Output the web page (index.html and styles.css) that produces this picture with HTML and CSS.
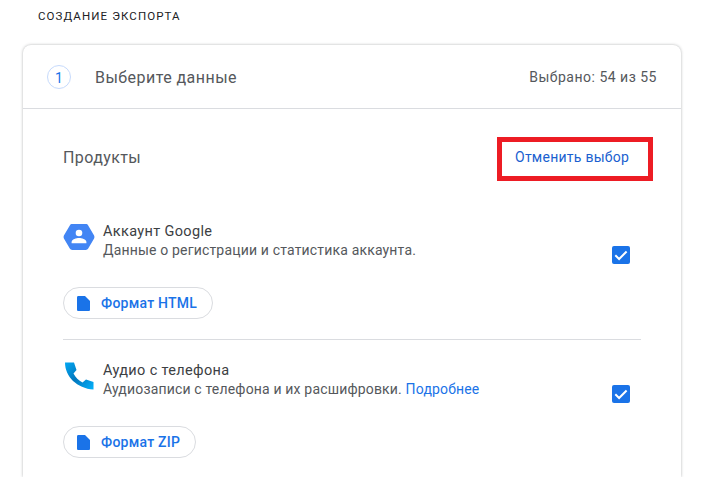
FILE: index.html
```html
<!DOCTYPE html>
<html lang="ru">
  <head>
    <meta charset="UTF-8" />
    <meta name="viewport" content="width=device-width, initial-scale=1.0" />
    <title>Создание экспорта</title>
    <link rel="stylesheet" href="styles.css">
  </head>
  <body>
    <h1 class="page-title">Создание экспорта</h1>

    <div class="card">
      <div class="step-header">
        <span class="step-number">1</span>
        <span class="step-title">Выберите данные</span>
        <span class="step-count">Выбрано: 54 из 55</span>
      </div>

      <div class="products">
        <div class="products-head">
          <span class="products-title">Продукты</span>
          <a class="deselect" href="#">Отменить выбор</a>
        </div>

        <div class="product">
          <div class="product-row">
            <svg class="product-icon" width="32" height="28" viewBox="0 0 32 28">
              <path fill="#4285f4" d="M9.200 1h13.600c1 0 1.900.5 2.400 1.400l5.900 10.200c.5.9.5 1.900 0 2.800l-5.900 10.200c-.5.9-1.400 1.400-2.400 1.400H9.200c-1 0-1.900-.5-2.400-1.400L.9 15.400c-.5-.9-.5-1.900 0-2.800L6.800 2.400C7.300 1.500 8.200 1 9.200 1z"/>
              <circle fill="#fff" cx="16" cy="10" r="3.300"/>
              <path fill="#fff" d="M8.600 20.200v-1.300c0-2.600 4.900-3.900 7.400-3.900s7.400 1.300 7.400 3.900v1.300z"/>
            </svg>
            <div class="product-text">
              <div class="product-name">Аккаунт Google</div>
              <div class="product-desc">Данные о регистрации и статистика аккаунта.</div>
            </div>
            <span class="checkbox">
              <svg width="18" height="18" viewBox="0 0 18 18"><path fill="none" stroke="#fff" stroke-width="2" d="M3.300 9.300l3.800 3.700 7.500-7.500"/></svg>
            </span>
          </div>
          <a class="format-chip" href="#">
            <svg width="13" height="15" viewBox="0 0 13 15"><path fill="#1a73e8" d="M1.300 0H8L13 5V13.700c0 .7-.6 1.300-1.300 1.300H1.300C.6 15 0 14.400 0 13.700V1.300C0 .6.600 0 1.300 0z"/></svg>
            Формат HTML
          </a>
        </div>

        <div class="product">
          <div class="product-row">
            <svg class="product-icon" width="32" height="28" viewBox="0 0 32 28">
              <defs>
                <linearGradient id="phone-grad" gradientUnits="userSpaceOnUse" x1="2" y1="0" x2="30" y2="27">
                  <stop offset="0" stop-color="#03a9f4"/>
                  <stop offset="0.5" stop-color="#0277bd"/>
                  <stop offset="1" stop-color="#03b0fa"/>
                </linearGradient>
              </defs>
              <path fill="url(#phone-grad)" d="M2 .5h9l2.500 7.500-3 3.500c2 4 5 7 9 9l3.500-3 7.500 2.500v7.500C14 26.500 2 14.500 2 .5z"/>
            </svg>
            <div class="product-text">
              <div class="product-name">Аудио с телефона</div>
              <div class="product-desc">Аудиозаписи с телефона и их расшифровки. <a href="#">Подробнее</a></div>
            </div>
            <span class="checkbox">
              <svg width="18" height="18" viewBox="0 0 18 18"><path fill="none" stroke="#fff" stroke-width="2" d="M3.300 9.300l3.800 3.700 7.500-7.500"/></svg>
            </span>
          </div>
          <a class="format-chip" href="#">
            <svg width="13" height="15" viewBox="0 0 13 15"><path fill="#1a73e8" d="M1.300 0H8L13 5V13.700c0 .7-.6 1.300-1.300 1.300H1.300C.6 15 0 14.400 0 13.700V1.300C0 .6.600 0 1.300 0z"/></svg>
            Формат ZIP
          </a>
        </div>
      </div>
    </div>
  </body>
</html>
```

FILE: styles.css
```css
html,
body {
  height: 100%;
}
body {
  display: flex;
  flex-direction: column;
  margin: 0;
  overflow: hidden;
  background-color: #fff;
  font-family: Roboto, "Noto Sans", sans-serif;
  color: #3c4043;
}
a {
  text-decoration: none;
  color: #1a73e8;
}
.page-title {
  flex-shrink: 0;
  margin: 0;
  padding: 9px 0 0 38px;
  height: 35px;
  font-size: 11.500px;
  line-height: 15px;
  font-weight: 400;
  letter-spacing: 1.1px;
  text-transform: uppercase;
  color: #202124;
}
.card {
  flex: 1;
  box-sizing: border-box;
  margin: 1px 0 0 23px;
  width: 658px;
  border-radius: 8px 8px 0 0;
  background-color: #fff;
  box-shadow: 0 0 3px rgba(60, 64, 67, 0.4);
}
.step-header {
  display: flex;
  align-items: center;
  box-sizing: border-box;
  height: 64px;
  padding: 1px 24px 0;
  border-bottom: 1px solid #dadce0;
}
.step-number {
  width: 24px;
  height: 24px;
  box-sizing: border-box;
  border: 1px solid #c6dafc;
  border-radius: 50%;
  margin-right: 24px;
  text-align: center;
  font-size: 14px;
  line-height: 24px;
  color: #1a73e8;
}
.step-title {
  flex: 1;
  font-size: 16px;
  letter-spacing: 0.45px;
  color: #55585c;
}
.step-count {
  font-size: 14px;
  letter-spacing: 0.5px;
  color: #55585c;
}
.products {
  padding: 28px 40px 0;
}
.products-head {
  display: flex;
  align-items: center;
  justify-content: space-between;
  height: 44px;
  margin-bottom: 43px;
}
.products-title {
  margin-top: -4px;
  font-size: 16px;
  letter-spacing: 0.4px;
  color: #55585c;
}
.deselect {
  box-sizing: border-box;
  width: 156px;
  height: 44px;
  margin-right: -12px;
  border: 5px solid #ed1c24;
  padding-left: 13px;
  font-size: 14px;
  letter-spacing: 0.25px;
  line-height: 30px;
  color: #1a5fd0;
}
.product {
  padding-bottom: 20px;
  border-bottom: 1px solid #dadce0;
  margin-bottom: 23px;
}
.product:last-child {
  padding-bottom: 0;
  border-bottom: none;
  margin-bottom: 0;
}
.product-row {
  display: flex;
  align-items: flex-start;
  height: 63px;
}
.product-icon {
  flex-shrink: 0;
  margin: -1px 8px 0 0;
}
.product-text {
  flex: 1;
  margin-top: -2px;
}
.product-name {
  font-size: 14.500px;
  line-height: 19px;
  letter-spacing: 0.35px;
  color: #3c4043;
}
.product-desc {
  font-size: 14px;
  line-height: 19px;
  letter-spacing: 0.17px;
  color: #55585c;
}
.checkbox {
  width: 18px;
  height: 18px;
  margin: 22px 11px 0 0;
  border-radius: 2px;
  background-color: #1a73e8;
}
.checkbox svg {
  display: block;
}
.format-chip {
  display: inline-flex;
  align-items: center;
  gap: 11px;
  box-sizing: border-box;
  height: 32px;
  padding: 0 15px 0 13px;
  border: 1px solid #dadce0;
  border-radius: 16px;
  font-size: 14px;
  font-weight: 500;
  letter-spacing: 0.25px;
}
```
